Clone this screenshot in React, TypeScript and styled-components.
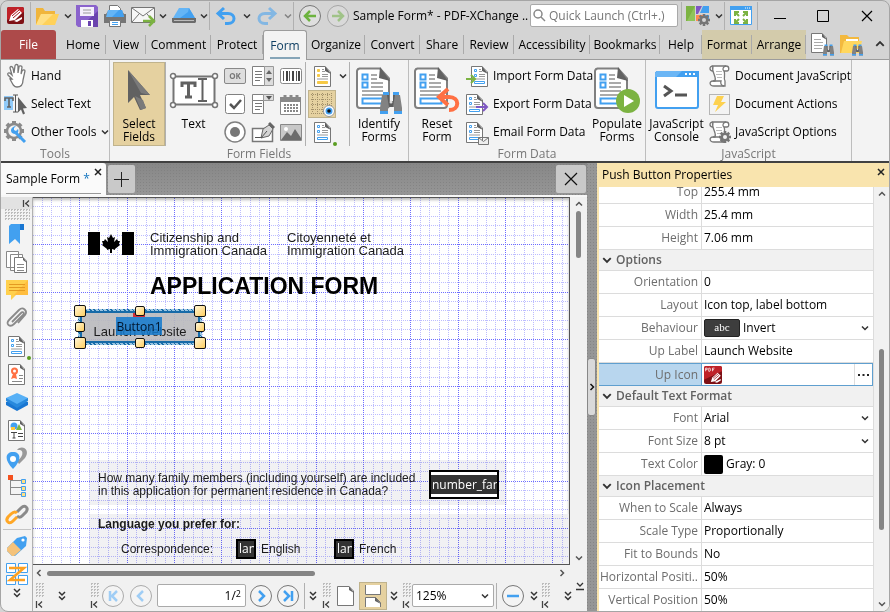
import React, { useState } from "react";
import styled, { createGlobalStyle, css } from "styled-components";

const ui = `"Open Sans", "Noto Sans", sans-serif`;
const doc = `"Liberation Sans", Arial, sans-serif`;
const BLUE = "#42a0f0";
const GREY = "#757575";
const DARK = "#616161";

const Global = createGlobalStyle`
  *, *::before, *::after { box-sizing: border-box; }
  body { margin: 0; background: #d4d4d4; font: 12px/16px ${ui}; color: #000; overflow: hidden; }
  button, input, select { font: inherit; color: inherit; margin: 0; padding: 0; border: 0; background: none; border-radius: 0; }
  svg { display: block; flex: none; overflow: visible; }
`;

/* ---------- icons ---------- */
type IconProps = { w: number; h: number; box?: string; children: React.ReactNode };
const Icon = ({ w, h, box, children }: IconProps) => (
  <svg width={w} height={h} viewBox={box || `0 0 ${w} ${h}`} fill="none" aria-hidden="true">{children}</svg>
);
const Chevron = ({ dir = "down", color = "#333", size = 8 }: { dir?: "down" | "up" | "left" | "right"; color?: string; size?: number }) => {
  const turn = { down: 0, up: 180, left: 90, right: 270 }[dir];
  return (
    <Icon w={size} h={size} box="0 0 8 8">
      <path d="M1 2.500 4 5.500 7 2.500" stroke={color} strokeWidth="1.500" transform={`rotate(${turn} 4 4)`} />
    </Icon>
  );
};
const DoubleChevron = () => (
  <Icon w={8} h={10}><path d="M1 1 4 4 7 1M1 5.500 4 8.500 7 5.500" stroke="#333" strokeWidth="1.500" /></Icon>
);
const PdfLogo = ({ size = 17, tag }: { size?: number; tag?: boolean }) => (
  <Icon w={size} h={size} box="0 0 17 17">
    <rect width="17" height="17" rx="2" fill="#7e1015" />
    <path d="M2 0h13a2 2 0 0 1 2 2v3L0 13V2a2 2 0 0 1 2-2Z" fill="#bf2229" />
    <g transform={tag ? "translate(5 5) scale(.72)" : undefined}>
      <path d="m2 14 2-6 7-6 4 4-7 7Z" fill="#fff" />
      <path d="m5 9 7-6M6 11l7-6" stroke="#a3191f" /><path d="m7 14 8-4v2l-5 3Z" fill="#fff" />
    </g>
    {tag && <path d="M1.500 5V2h1.500v1.500H1.500M4.500 2v3h1l.5-.5V2.500L5.500 2ZM8 5V2h2M8 3.500h1.500" stroke="#fff" strokeWidth=".7" />}
  </Icon>
);
const Folder = () => (
  <Icon w={23} h={18}>
    <path d="M0 1h7l2 3h10v5H5L1 18H0Z" fill="#f0b53c" />
    <path d="M5 7h18l-4 11H0Z" fill="#ffd15a" /><path d="m5 7 12 0L6 18H0Z" fill="#ffdf84" />
  </Icon>
);
const Floppy = () => (
  <Icon w={22} h={22}>
    <path d="M0 0h20l2 2v20H2l-2-2Z" fill="#8a63cc" /><path d="M22 6v16H4Z" fill="#6a43ae" />
    <path d="M4 2h14v9H4z" fill="#f4f0fb" /><path d="M7 5h8M7 8h8" stroke="#9a9a9a" />
    <path d="M5 15h12v7H5z" fill="#fff" /><path d="M12 16h3v5h-3z" fill="#6a43ae" />
  </Icon>
);
const Printer = () => (
  <Icon w={22} h={22}>
    <path d="M5.500.500h8l3 3V8h-11z" fill="#fff" stroke="#757575" />
    <path d="M0 9h2l2-3h14l2 3h2v9H0z" fill="#757575" /><path d="M4 5h14l2 7H2z" fill="#64b5f6" /><path d="M15 5h3l2 7H8Z" fill={BLUE} />
    <path d="M5.500 15.500h11v6h-11z" fill="#fff" stroke="#757575" /><path d="M8 17.500h6M8 19.500h6" stroke={BLUE} />
  </Icon>
);
const Mail = () => (
  <Icon w={25} h={18}>
    <path d="M.5.500h23v15h-23z" fill="#f6f6f6" stroke="#757575" />
    <path d="m1 1 11 8 11-8M1 15l7-8M23 15l-7-8" stroke="#757575" />
    <path d="M12 14h11M18 9l5 5-5 5" stroke="#7cb342" strokeWidth="2.500" />
  </Icon>
);
const Scanner = () => (
  <Icon w={24} h={17}>
    <path d="M7 1h10l6 10H1Z" fill="#64b5f6" /><path d="M17 1l6 10H8l8-6Z" fill={BLUE} />
    <path d="M0 11h24v4l-1 1H1l-1-1z" fill="#6b6b6b" /><path d="M2 13.500h20" stroke="#bbb" />
  </Icon>
);
const Undo = ({ faded }: { faded?: boolean }) => (
  <Icon w={20} h={18}>
    <g transform={faded ? "translate(20 0) scale(-1 1)" : undefined} opacity={faded ? 0.55 : 1} stroke={BLUE} strokeWidth="3">
      <path d="M8 1 2 6.500l6 5.500" /><path d="M2 6.500h10c8 0 8 10 0 10H9" />
    </g>
  </Icon>
);
const NavCircle = ({ d, color, edge = "#777" }: { d: string; color: string; edge?: string }) => (
  <Icon w={22} h={22}>
    <circle cx="11" cy="11" r="10.500" stroke={edge} fill="#fff" fillOpacity=".25" />
    <path d={d} stroke={color} strokeWidth="2.500" />
  </Icon>
);
const Magnifier = () => (
  <Icon w={13} h={13}><circle cx="5" cy="5" r="4" stroke="#888" strokeWidth="1.500" /><path d="m8 8 4 4" stroke="#888" strokeWidth="1.500" /></Icon>
);
const gearTeeth = [0, 45, 90, 135, 180, 225, 270, 315];
const Gear = ({ x, y, r, color = GREY, hole = "#f3f3f3" }: { x: number; y: number; r: number; color?: string; hole?: string }) => (
  <g transform={`translate(${x} ${y}) scale(${r / 6})`}>
    {gearTeeth.map((a) => <rect key={a} x="-1.300" y="-6" width="2.600" height="4" fill={color} transform={`rotate(${a})`} />)}
    <circle r="4.300" fill={color} /><circle r="2" fill={hole} />
  </g>
);
const LayoutIcon = () => (
  <Icon w={24} h={21}>
    <path d="M0 1h9v15H0z" fill="#7cb342" /><path d="M9 1v15H1Z" fill="#8fc45a" /><path d="M10 1h6l-4 8h-2z" fill="#7e57c2" />
    <path d="M17 1h6v7h-9z" fill={BLUE} /><path d="M10 10h13v6H10z" fill="#ff8a50" /><path d="M17 10h6v5h-6z" fill={BLUE} />
    <Gear x={18} y={15} r={6} hole="#d4d4d4" />
  </Icon>
);
const FullScreen = () => (
  <Icon w={22} h={19}>
    <path d="M.5.500h21v18H.5z" fill="#fff" stroke={BLUE} /><path d="M0 0h22v4H0z" fill={BLUE} /><path d="M15 2h1m1 0h1m1 0h1" stroke="#fff" />
    <path d="M5 10V6h4M13 6h4v4M17 13v4h-4M9 17H5v-4" stroke="#7cb342" strokeWidth="2" />
    <path d="m5 6 4 4m8-4-4 4m4 7-4-4m-8 4 4-4" stroke="#7cb342" strokeWidth="2" />
  </Icon>
);
const Binoculars = ({ x, y, s }: { x: number; y: number; s: number }) => (
  <g transform={`translate(${x} ${y}) scale(${s})`}>
    <path d="M2 4h7v6h4V4h7l2 13v6h-8v-7H8v7H0v-6Z" fill="#828282" /><path d="M7 4h2v6h4V4h2l-2 12H9Z" fill="#5d5d5d" />
    <path d="M3 1h6v3H3zM13 1h6v3h-6zM0 20h8v3H0zM14 20h8v3h-8z" fill={BLUE} /><circle cx="11" cy="11" r="1.500" fill="#ddd" />
  </g>
);
const PageOutline = ({ w, h, fold }: { w: number; h: number; fold: number }) => (
  <>
    <path d={`M.5 .5H${w - fold}L${w - 0.5} ${fold}V${h - 0.5}H.5Z`} fill="#fff" stroke="#777" />
    <path d={`M${w - fold} 0 L${w} ${fold + 2} L${w - fold} ${fold - 1}Z`} fill={DARK} />
  </>
);
const SearchPage = () => (
  <Icon w={24} h={22}>
    <PageOutline w={16} h={20} fold={5} /><path d="M3 6.500h7M3 9.500h9M3 12.500h9M3 15.500h8" stroke="#aaa" /><Binoculars x={12} y={11} s={0.5} />
  </Icon>
);
const SearchFolder = () => (
  <Icon w={24} h={22}>
    <path d="M0 2h7l2 2h10v16H0Z" fill="#f3b93f" /><path d="M4 8h18l-3 12H1Z" fill="#ffd75e" /><path d="M6 6h12v2H6z" fill="#fff" /><Binoculars x={12} y={11} s={0.5} />
  </Icon>
);
const BigForm = ({ children }: { children?: React.ReactNode }) => (
  <Icon w={46} h={47}>
    <path d="M3 1.500h21l9 10V38a3 3 0 0 1-3 3H4a3 3 0 0 1-3-3V4a3 3 0 0 1 3-2.500Z" fill="#fff" stroke="#808080" strokeWidth="2" />
    <path d="M24 0 34 14 23 11Z" fill={DARK} />
    <path d="M6.500 7.500h5v5h-5zM6.500 15.500h5v5h-5zM6.500 31.500h21v5h-21z" stroke={BLUE} strokeWidth="2" />
    <path d="M15 8h6M15 12h6M15 16h12M15 20h12M6 24h21M6 28h21" stroke="#8f8f8f" strokeWidth="1.500" />
    {children}
  </Icon>
);
const SmallForm = ({ children, tint = BLUE, w = 17, shift = 0 }: { children?: React.ReactNode; tint?: string; w?: number; shift?: number }) => (
  <Icon w={w} h={21}>
    <g transform={`translate(${shift} 0)`}>
      <PageOutline w={17} h={21} fold={6} />
      <path d="M3.500 3.500h2v2h-2zM3.500 8.500h2v2h-2zM3.500 15.500h10v2h-10z" stroke={tint} fill={tint === BLUE ? "none" : tint} />
      <path d="M8 3.500h2M8 5.500h3M8 8.500h6M8 10.500h6M3 13h11" stroke="#999" />
    </g>
    {children}
  </Icon>
);
const Scroll = ({ gear }: { gear?: boolean }) => (
  <Icon w={22} h={22}>
    <path d="M4 1h13c4 0 3 5 1 5h-3c2 4-1 7 1 10v5H5c-5 0-5-5-1-5h2C8 11 2 8 4 1Z" fill="#fff" stroke="#777" strokeWidth="1.300" />
    <path d="M4 1c-4 0-4 5 0 5M15 6c-2-1-1-5 2-5M4 16h8c-1 3 1 5 3 5" stroke="#777" strokeWidth="1.300" />
    <path d="M7 6.500h6M7 9.500h6M8 12.500h5" stroke="#bbb" />
    {gear && <Gear x={16} y={16} r={6} />}
  </Icon>
);
const Hand = () => (
  <Icon w={20} h={24}>
    <path d="M6 15 2 11c-1-2 1-3 3-1l1 1L4 4c0-2 2-2 3 0l1 5L9 2c0-2 3-2 3 0v7l1-6c0-2 3-1 3 0l-1 7 1-3c1-2 3-1 3 0l-2 9c0 5-2 7-6 7-3 0-4-2-7-8Z" fill="#fff" stroke="#777" strokeWidth="1.300" />
  </Icon>
);
const SelectTextIcon = () => (
  <Icon w={24} h={20}>
    <path d="M0 2h9v14H0z" fill="#90caf9" /><path d="M1 7V4h8v3M5 4v9M3 13h4" stroke={DARK} strokeWidth="1.600" />
    <path d="M9 1h5M9 18h5M11.500 1v17" stroke="#555" /><path d="m14 3 9 11-4 .5 2 5-2 1-2-5-3 3Z" fill={DARK} />
  </Icon>
);
const OtherTools = () => (
  <Icon w={23} h={23}>
    <g transform="translate(10 10)">
      {gearTeeth.map((a) => <rect key={a} x="-2" y="-10" width="4" height="4" fill="#8a8a8a" transform={`rotate(${a})`} />)}
      <circle r="7" stroke="#8a8a8a" strokeWidth="2.500" fill="#f3f3f3" />
    </g>
    <path d="M8 7c-2 2-1 6 3 6 3 0 4-3 3-5l-2 2-2-1 0-2 2-2c-2 0-3 1-4 2Z" fill={BLUE} /><path d="m12 12 9 9" stroke={BLUE} strokeWidth="3" />
  </Icon>
);
const BigArrow = () => (
  <Icon w={24} h={40}><path d="M1 0v33l6-6 6 13 6-2-6-13h10Z" fill={DARK} /><path d="M1 0 23 25l-9-2ZM8 26l6 14 5-2-3-8Z" fill="#7a7a7a" /></Icon>
);
const TextFieldIcon = () => (
  <Icon w={48} h={35}>
    <path d="M3.500 3.500h41v28h-41z" fill="#fff" stroke={GREY} strokeWidth="2" />
    {[3, 45].map((x) => [3, 32].map((y) => <circle key={`${x}-${y}`} cx={x} cy={y} r="2.500" fill="#fff" stroke={GREY} strokeWidth="1.500" />))}
    <path d="M12 14v-4h13v4M18.500 10v14M15 24h7" stroke={DARK} strokeWidth="3" /><path d="M28 6h9M28 28h9M32.500 6v22" stroke={DARK} strokeWidth="2" />
  </Icon>
);
const fieldIcons: Record<string, React.ReactNode> = {
  List: <Icon w={22} h={20}><path d="M.5.500h12v19H.5z" fill="#fff" stroke="#808080" /><path d="M12.500.500h9v19h-9z" fill="#ddd" stroke="#999" /><path d="M3 5.500h7M3 8.500h7M3 11.500h7M3 14.500h5" stroke="#777" /><path d="m14 8 3-4 3 4zM14 12l3 4 3-4z" fill="#666" /></Icon>,
  Barcode: <Icon w={22} h={16}><rect x=".5" y=".5" width="21" height="15" rx="2" fill="#fff" stroke="#888" /><path d="M3.500 3v10M9.500 3v10M16.500 3v10" stroke="#555" /><path d="M7 3v10M13 3v10M19 3v10" stroke="#444" strokeWidth="2" /></Icon>,
  Check: <Icon w={20} h={20}><rect x=".5" y=".5" width="19" height="19" rx="2" fill="#fff" stroke="#808080" /><path d="m5 10 4 4 7-8" stroke="#555" strokeWidth="2.500" /></Icon>,
  Combo: <Icon w={22} h={20}><path d="M.5 6.500h11v13H.5zM.5.500h11v6H.5z" fill="#fff" stroke="#808080" /><path d="M11.500.500h10v6h-10z" fill="#ddd" stroke="#999" /><path d="M3 9.500h7M3 12.500h7M3 15.500h5" stroke="#777" /><path d="M14 2h6l-3 4z" fill="#555" /></Icon>,
  Date: <Icon w={22} h={21}><path d="M.5 3.500h20v17H.5z" fill="#fff" stroke="#888" /><path d="M0 3h21v5H0z" fill="#888" /><path d="M5 5V1M11 5V1M17 5V1" stroke="#888" strokeWidth="3" /><path d="M4 11h14M4 14h14M4 17h14" stroke="#888" strokeWidth="2" strokeDasharray="2 1" /></Icon>,
  Radio: <Icon w={22} h={22}><circle cx="11" cy="11" r="10" fill="#fff" stroke="#808080" strokeWidth="1.500" /><circle cx="11" cy="11" r="5" fill="#777" /></Icon>,
  Sign: <Icon w={23} h={20}><path d="M.5 6.500h20v13H.5z" fill="#fff" stroke="#777" strokeWidth="1.500" /><path d="M3 15.500h8" stroke="#555" /><path d="m9 16 2-9 6-4 4 4-4 7Z" fill="#d5d5d5" stroke="#666" /><path d="m9 16 6-7" stroke="#555" /><path d="m16 2 2-2 5 5-2 2z" fill="#666" /></Icon>,
  Image: <Icon w={22} h={17}><rect width="22" height="17" rx="1" fill="#888" /><path d="M1 1h20v15H1z" fill="#c8c8c8" /><circle cx="6" cy="5" r="2" fill="#fff" /><path d="m1 16 6-8 4 4 4-7 6 9v2z" fill="#6c6c6c" /></Icon>,
};
const GridEye = () => (
  <Icon w={24} h={24}>
    {[2, 7, 12, 17, 21].map((p) => <path key={p} d={`M${p + 0.5} 1v20M1 ${p + 0.5}h20`} stroke="#a2906a" strokeDasharray="1 1" />)}
    <circle cx="19" cy="19" r="5.500" fill="#fff" stroke="#999" /><circle cx="19" cy="19" r="3.500" fill={BLUE} /><circle cx="19" cy="19" r="1.800" fill="#111" />
  </Icon>
);
const ConsoleIcon = () => (
  <Icon w={44} h={38}>
    <rect x="1" y="1" width="42" height="36" rx="2" fill="#fff" stroke={BLUE} strokeWidth="2" /><path d="M0 2 2 0h42v6H0z" fill={BLUE} /><path d="M0 2 2 0h25l-6 6H0z" fill="#6bb6f5" />
    <path d="M30 3h2m2 0h2m2 0h2" stroke="#fff" strokeWidth="2" /><path d="m9 15 7 5-7 5" stroke="#555" strokeWidth="3" /><path d="M20 24h12" stroke="#555" strokeWidth="3" />
  </Icon>
);
const Bolt = () => (
  <Icon w={21} h={21}><path d="M.5.500h20v20H.5z" stroke="#777" strokeDasharray="1 1" /><path d="M8 2h7l-3 6h5L6 18l3-7H4Z" fill="#fdd14f" /></Icon>
);
const sideIcons: { name: string; art: React.ReactNode }[] = [
  { name: "Bookmarks", art: <Icon w={15} h={20}><path d="M2 0h13v6h-4v14l-5-5-6 5V2Z" fill={BLUE} /><path d="M11 0h4v6h-4z" fill="#1976d2" /></Icon> },
  { name: "Thumbnails", art: <Icon w={21} h={22}><path d="M.5.500h12v16H.5zM4.500 3.500h12v16h-12z" fill="#fff" stroke="#888" /><g transform="translate(8 6)"><PageOutline w={13} h={16} fold={4} /><path d="M3 7.500h7M3 10.500h7M3 13.500h7" stroke="#888" /></g></Icon> },
  { name: "Comments", art: <Icon w={22} h={20}><path d="M0 0h22v15H10l-5 5v-5H0z" fill="#ffd04d" /><path d="M22 0v15H8z" fill="#ffbd3e" /><path d="M3 4.500h16M3 7.500h16M3 10.500h16" stroke="#e39a22" /></Icon> },
  { name: "Attachments", art: <Icon w={22} h={20}><path d="m6 14 9-9c2-2 4 0 2 2L8 16c-4 4-9 0-5-4L13 2c4-4 9 1 6 5l-7 8" stroke="#8a8a8a" strokeWidth="1.800" /></Icon> },
  { name: "Fields", art: <SmallForm><circle cx="21" cy="22" r="2" fill="#5a9e20" /></SmallForm> },
  { name: "Signatures", art: <Icon w={17} h={21}><PageOutline w={17} h={21} fold={5} /><path d="m5 10-2 5 3-1 3 1-1-5" fill="#ff7043" /><circle cx="6.500" cy="7" r="3.500" fill="#ff7043" /><circle cx="6.500" cy="7" r="1.500" fill="#fff" /><path d="M11 11.500h4M11 14.500h4M4 17.500h10" stroke="#888" /></Icon> },
  { name: "Layers", art: <Icon w={22} h={20}><path d="m0 13 11 6 11-6v-3H0z" fill="#1976d2" /><path d="m0 9 11 7 11-7v-3H0z" fill="#2889dd" /><path d="m0 6 11-5 11 5-11 6Z" fill="#57b0f6" /></Icon> },
  { name: "Content", art: <Icon w={17} h={21}><PageOutline w={17} h={21} fold={5} /><circle cx="6" cy="6" r="3.500" fill={BLUE} /><path d="m8 10 3-6 3 6z" fill="#7cb342" /><path d="M3 7h4v3H3z" fill="#ffc83d" /><path d="M3 12.500h6M6 12v6M4.500 18h3M10 13.500h5M10 16.500h5" stroke="#444" /></Icon> },
  { name: "Destinations", art: <Icon w={22} h={22}><path d="M11 3c5-6 14 0 8 8l-6 6-2-3c6-4 7-10 3-11Z" fill="#999" /><path d="M7 22c-9-9-8-17 0-17s9 8 0 17Z" fill={BLUE} /><circle cx="7" cy="12" r="3" fill="#fff" /></Icon> },
  { name: "Structure", art: <Icon w={18} h={22}><path d="M2.500 4v15.500M2 5.500h12M2 12.500h12M2 19.500h12" stroke="#888" /><path d="M0 0h5v5H0z" fill="#f4511e" /><path d="M13.500 4.500h4v4h-4zM13.500 11.500h4v4h-4zM13.500 17.500h4v4h-4z" fill="#ffe082" stroke={BLUE} /></Icon> },
  { name: "Links", art: <Icon w={22} h={20}><path d="m11 8 4-4c4-4 8 0 5 4l-4 4c-2 2-4 1-5 0" stroke="#8a8a8a" strokeWidth="3" /><path d="M11 9c-2-2-4-1-6 1l-3 3c-3 4 1 8 5 4l4-4" stroke="#ffa726" strokeWidth="3" /></Icon> },
];
const Tag = () => <Icon w={20} h={20}><path d="M10 2 18 0l2 2-1 8L8 20H5L0 15v-3Z" fill={BLUE} /><path d="m6 6 8 8-7 6H5l-5-5v-3Z" fill="#f4c27a" /><circle cx="16" cy="4" r="1.600" fill="#fff" /></Icon>;
const Flow = () => <Icon w={22} h={22}><path d="M.5.500h9v9h-9zM12.500.500h9v9h-9zM.5 12.500h9v9h-9zM12.500 12.500h9v9h-9z" fill="#fff" stroke={BLUE} /><path d="M3 5h15L4 17h15" stroke="#ffa01e" strokeWidth="2.500" /></Icon>;
const Collapse = () => <Icon w={7} h={7}><path d="M.5 0v7M6 .500 3 3.500l3 3M2 3.500h2" stroke="#444" strokeWidth="1.300" /></Icon>;
const SmallCross = () => <Icon w={6} h={6}><path d="m0 0 6 6M6 0 0 6" stroke="#222" strokeWidth="1.500" /></Icon>;
const MapleFlag = () => (
  <Icon w={46} h={23}>
    <path d="M0 0h12v23H0zM34 0h12v23H34z" fill="#000" />
    <path d="m23 2 2 4 2-1-1 5 3-3 1 2h2l-1 3 1 1-5 4v1l-3-1v4h-2v-4l-3 1v-1l-5-4 1-1-1-3h2l1-2 3 3-1-5 2 1Z" fill="#000" />
  </Icon>
);

/* ---------- frame ---------- */
const Window = styled.div`
  height: 100vh; display: flex; flex-direction: column; background: #d4d4d4;
  border: 1px solid #a5a5a5; border-radius: 8px; overflow: hidden;
`;
const TitleBar = styled.header`flex: none; height: 29px; display: flex; align-items: center;`;
const Tool = styled.button<{ $w: number; $faded?: boolean }>`
  flex: none; width: ${(p) => p.$w}px; height: 28px; display: flex; align-items: center; justify-content: center;
  opacity: ${(p) => (p.$faded ? 0.5 : 1)};
`;
const Divider = styled.i<{ $h?: number }>`flex: none; width: 1px; height: ${(p) => p.$h || 28}px; background: #b0b0b0;`;
const Caption = styled.h1`flex: 1 1 0; min-width: 0; margin: 0 0 0 3px; font: 12px/16px ${ui}; white-space: nowrap;`;
const Search = styled.label`
  flex: none; width: 148px; height: 23px; display: flex; align-items: center; gap: 3px; padding: 0 2px; margin-right: 3px;
  background: #fff; border: 1px solid #a9a9a9; border-radius: 2px; color: #777;
  input { flex: 1; min-width: 0; outline: 0; } input::placeholder { color: #777; opacity: 1; }
`;
const TabStrip = styled.nav`flex: none; height: 30px; display: flex; align-items: stretch; border-bottom: 1px solid #9c9c9c;`;
const Tab = styled.button<{ $w: number; $kind?: "file" | "active" | "context" }>`
  flex: none; width: ${(p) => p.$w}px; position: relative; white-space: nowrap; text-align: center;
  &::after { content: ""; position: absolute; right: 0; top: 5px; height: 19px; width: 1px; background: #aaa; }
  ${(p) => p.$kind === "file" && css`background: #ad4a4a; color: #fff; border-radius: 3px 3px 0 0; margin-right: 4px; &::after { display: none; }`}
  ${(p) => p.$kind === "context" && css`background: #d3cbab;`}
  ${(p) => p.$kind === "active" && css`
    background: #f3f3f3; color: #0f3f63; border: 1px solid #9c9c9c; border-bottom: 0; border-radius: 3px 3px 0 0; margin-bottom: -1px; z-index: 1;
    &&::after { left: 6px; right: 6px; width: auto; top: auto; bottom: 1px; height: 2px; background: #86a5b8; }`}
`;
const Spacer = styled.div`flex: 1;`;

/* ---------- ribbon ---------- */
const Ribbon = styled.section`flex: none; height: 103px; display: flex; background: #f3f3f3; border-bottom: 2px solid #414141;`;
const Group = styled.div<{ $w: number }>`
  flex: none; width: ${(p) => p.$w}px; display: flex; flex-direction: column; border-right: 1px solid #bdbdbd;
`;
const GroupBody = styled.div`height: 87px; display: flex; padding-top: 2px;`;
const GroupTitle = styled.div`height: 14px; line-height: 14px; color: #777; text-align: center;`;
const Stack = styled.div<{ $w: number }>`flex: none; width: ${(p) => p.$w}px;`;
const RowButton = styled.button`
  display: flex; align-items: center; gap: 4px; height: 28px; padding-left: 1px; white-space: nowrap;
  span { flex: none; width: 23px; display: flex; justify-content: center; }
`;
const BigButton = styled.button<{ $w: number; $on?: boolean }>`
  flex: none; width: ${(p) => p.$w}px; height: 84px; display: flex; flex-direction: column; align-items: center; line-height: 13px;
  background: ${(p) => (p.$on ? "#e5d1a0" : "none")}; border: 1px solid ${(p) => (p.$on ? "#c0b38c" : "transparent")};
  span { height: 54px; display: flex; align-items: center; flex: none; }
`;
const FieldGrid = styled.div`
  flex: none; width: 84px; display: grid; grid-template-columns: repeat(3, 28px); grid-auto-rows: 28px;
`;
const IconButton = styled.button<{ $on?: boolean }>`
  width: 28px; height: 28px; display: flex; align-items: center; justify-content: center;
  background: ${(p) => (p.$on ? "#e5d1a0" : "none")}; border: 1px solid ${(p) => (p.$on ? "#c0b38c" : "transparent")};
`;
const OkKey = styled.b`
  width: 22px; height: 16px; border: 1px solid #888; border-radius: 2px; background: #dedede; color: #777; font: bold 8px/14px ${ui}; text-align: center;
`;
const Column = styled.div`flex: none; width: 43px; display: grid; grid-template-columns: 28px 1fr; grid-auto-rows: 28px; align-items: center; justify-items: center; padding-left: 2px;`;

/* ---------- workspace ---------- */
const Work = styled.main`
  flex: 1; min-height: 0; display: flex; background-color: #969696;
  background-image: radial-gradient(#858585 1px, transparent 1px); background-size: 3px 3px;
`;
const Left = styled.div`flex: 1; min-width: 0; display: flex; flex-direction: column;`;
const DocTabs = styled.div`flex: none; height: 34px; display: flex; align-items: center; border-bottom: 2px solid #f7f7f7; background: linear-gradient(#7d7d7d99, #96969600);`;
const DocTab = styled.div`
  width: 105px; height: 32px; padding: 8px 5px 0 5px; display: flex; justify-content: space-between; background: #fafafa; position: relative; white-space: nowrap;
  border-radius: 0 3px 0 0; em { font-style: normal; color: #1677c0; }
  &::after { content: ""; position: absolute; left: 5px; right: 5px; bottom: 1px; height: 1px; background: #999; }
  button { height: 6px; margin-top: -2px; }
`;
const SquareButton = styled.button<{ $w: number }>`
  width: ${(p) => p.$w}px; height: 28px; background: #c9c9c9; border-radius: 2px; display: flex; align-items: center; justify-content: center; margin: 0 1px 0 2px;
`;
const Body = styled.div`flex: 1; min-height: 0; display: flex;`;
const SideBar = styled.aside`flex: none; width: 32px; background: #f3f3f3; display: flex; flex-direction: column; align-items: center; border-right: 1px solid #b0b0b0;`;
const SideTop = styled.div`flex: none; align-self: stretch; height: 12px; background: #e2e2e2; display: flex; justify-content: flex-end; align-items: center; padding-right: 2px;`;
const Grip = styled.i<{ $w: number; $h: number }>`
  flex: none; width: ${(p) => p.$w}px; height: ${(p) => p.$h}px;
  background: conic-gradient(#bcbcbc 25%, transparent 0) 0 0 / 3px 3px;
`;
const SideButton = styled.button`flex: none; width: 28px; height: 28px; display: flex; align-items: center; justify-content: center;`;
const SideLine = styled.i`flex: none; width: 28px; height: 1px; margin: 1px 0 2px; background: #c4c4c4;`;
const Center = styled.div`flex: 1; min-width: 0; display: flex; flex-direction: column; background: #f1f1f1;`;
const ViewRow = styled.div`flex: 1; min-height: 0; display: flex;`;
const Canvas = styled.div`
  flex: 1; min-width: 0; position: relative; overflow: hidden; background: #fff; font-family: ${doc}; color: #1c1c1c;
  border: 1px solid #555; border-left: 0; box-shadow: inset 0 2px 3px #bbb;
`;
const VScroll = styled.div<{ $w: number }>`flex: none; width: ${(p) => p.$w}px; background: #f1f1f1; display: flex; flex-direction: column; align-items: center; padding: 1px 0;`;
const Thumb = styled.i<{ $h: number; $top?: number }>`width: 5px; height: ${(p) => p.$h}px; margin-top: ${(p) => p.$top || 0}px; border-radius: 3px; background: #858585;`;
const HScroll = styled.div`flex: none; height: 16px; display: flex; align-items: center; padding: 0 19px 0 0;`;
const HThumb = styled.i`width: 50%; height: 5px; margin: 0 auto 0 2px; border-radius: 3px; background: #858585;`;
const ScrollButton = styled.button`width: 12px; height: 12px; display: flex; align-items: center; justify-content: center;`;
const Status = styled.footer`flex: none; height: 30px; padding-bottom: 1px; display: flex; align-items: center;`;
const GripCell = styled.div<{ $w: number }>`
  flex: none; width: ${(p) => p.$w}px; height: 26px; display: flex; flex-direction: column; align-items: center; gap: 3px;
`;
const PageBox = styled.label`
  flex: none; width: 89px; height: 23px; display: flex; align-items: center; justify-content: flex-end; margin: 0 4px 0 2px; padding-right: 4px;
  background: #fff; border: 1px solid #aaa; border-radius: 2px;
  input { width: 20px; text-align: right; outline: 0; } small { font-size: 9px; margin-bottom: 4px; }
`;
const Picker = styled.span<{ $w?: number }>`
  display: flex; align-items: center; ${(p) => (p.$w ? `flex: none; width: ${p.$w}px; height: 23px; border: 1px solid #aaa; background: #fff; border-radius: 2px; padding: 0 4px 0 3px;` : "flex: 1; padding-right: 4px;")}
  select { flex: 1; min-width: 0; appearance: none; outline: 0; height: 20px; } svg { margin-left: -8px; pointer-events: none; }
`;
const CornerTool = styled.button`align-self: flex-start; width: 8px; height: 10px;`;
const Splitter = styled.div`flex: none; width: 10px; display: flex; align-items: center;`;
const SplitButton = styled.button`width: 9px; height: 58px; background: #d9d9d9; border: 1px solid #888; border-radius: 3px; display: flex; align-items: center; justify-content: center;`;

/* ---------- document ---------- */
const Sheet = styled.article`height: 100%; overflow: hidden; white-space: nowrap; font-size: 12px; line-height: 13px;`;
const Letterhead = styled.div`display: flex; gap: 16px; padding: 33px 0 0 55px; font-size: 13px; height: 73px; svg { margin-top: 1px; } div { min-width: 121px; }`;
const Title = styled.h2`margin: 0 0 0 117px; font: bold 23px/31px ${doc}; height: 189px; color: #000;`;
const Question = styled.div`
  width: 418px; height: 45px; margin-left: 56px; padding: 4px 8px 0 9px; display: flex; justify-content: space-between; align-items: center; background: #f1f1f3;
`;
const Language = styled.div`margin: 9px 0 0 56px; padding: 4px 0 0 9px; height: 90px; background: #f1f1f3;`;
const Options = styled.div`display: flex; align-items: center; gap: 5px; height: 20px; margin: 8px 0 0 23px; `;
const Opt = styled.span<{ $w: number }>`width: ${(p) => p.$w}px;`;
const DarkField = styled.span<{ $w: number; $h: number }>`
  flex: none; width: ${(p) => p.$w}px; height: ${(p) => p.$h}px; border: 2px solid #000; background: #333; color: #fff; overflow: hidden; display: flex; align-items: center;
  font: 12px/18px ${ui}; padding-left: 1px; position: relative; z-index: 2; ${(p) => p.$h > 20 && css`box-shadow: inset 0 3px #fff, inset 0 -3px #fff;`}
`;
const GridLayer = styled.svg`position: absolute; inset: 0; width: 100%; height: 100%; z-index: 1; pointer-events: none; mix-blend-mode: multiply;`;
const Selected = styled.div`
  position: absolute; z-index: 3; left: 45px; top: 111px; width: 124px; height: 36px; border: 2px solid #176ba8;
  border-image: repeating-linear-gradient(45deg, #176ba8 0 1px, #9cc6e2 1px 3px) 2;
  background: rgba(185, 185, 188, 0.9); box-shadow: inset 0 0 0 2px #176ba8; font: 13px/30px ${doc}; text-align: center; padding-top: 6px;
`;
const FieldName = styled.span`
  position: absolute; left: 36px; top: 6px; width: 46px; height: 18px; background: rgba(20, 122, 205, 0.86); font: 12px/19px ${ui}; text-align: center; color: #00152b;
`;
const RedMark = styled.i`position: absolute; left: 53px; top: 2px; width: 12px; height: 4px; background: #d32f3a;`;
const Handle = styled.i<{ $x: number; $y: number; $s: number }>`
  position: absolute; width: ${(p) => p.$s}px; height: ${(p) => p.$s}px; left: ${(p) => p.$x - p.$s / 2}px; top: ${(p) => p.$y - p.$s / 2}px;
  border: 1px solid #111; border-radius: 2px; background: linear-gradient(135deg, #fff6d8, #ffcf61);
`;

/* ---------- properties ---------- */
const Panel = styled.aside`flex: none; width: 292px; display: flex; flex-direction: column; background: #f9e4ae; padding-left: 2px;`;
const PanelHead = styled.div`flex: none; height: 24px; display: flex; justify-content: space-between; padding: 4px 5px 0 3px; button { height: 9px; }`;
const PanelBody = styled.div`flex: 1; min-height: 0; display: flex; background: #f1f1f1; overflow: hidden;`;
const Clip = styled.div`flex: 1; min-width: 0; overflow: hidden;`;
const Table = styled.table`
  width: 100%; table-layout: fixed; border-collapse: separate; border-spacing: 0; background: #fff; margin-top: -6px; border-right: 1px solid #dcdcdc;
  td, th { padding: 0; height: 23px; border-bottom: 1px solid #dcdcdc; line-height: 16px; white-space: nowrap; overflow: hidden; }
  col:first-child { width: 103px; }
`;
const Label = styled.th<{ $on?: boolean }>`
  text-align: right; font-weight: 400; color: #6d6d6d; border-right: 1px solid #dcdcdc; background: ${(p) => (p.$on ? "#b8d6ee" : "#fff")};
  && { padding-right: 3px; ${(p) => p.$on && "border-color: #5f9fcf; border-top: 1px solid #5f9fcf;"} }
`;
const Value = styled.td<{ $on?: boolean }>`&& { padding-left: 2px; ${(p) => p.$on && "border-color: #5f9fcf; border-top: 1px solid #5f9fcf; border-right: 1px solid #5f9fcf;"} }`;
const ValueLine = styled.div`display: flex; align-items: center; gap: 3px; height: 21px;`;
const Section = styled.th`
  text-align: left; color: #616161; background: #f1f1f1;
  && { height: 21px; padding-left: 3px; } button { display: flex; align-items: center; gap: 4px; font-weight: 600; height: 20px; }
`;
const Abc = styled.b`width: 36px; height: 18px; border: 1px solid #222; border-radius: 2px; background: #3d3d3d; color: #fff; font: 11px/14px "Liberation Serif", serif; text-align: center;`;
const Swatch = styled.i`width: 19px; height: 19px; border-radius: 2px; background: #000;`;
const More = styled.button`margin-left: auto; width: 18px; height: 21px; border-left: 1px solid #ddd; display: flex; align-items: center; justify-content: center;`;

const tabs: [string, number, ("file" | "active" | "context")?][] = [
  ["File", 55, "file"], ["Home", 46], ["View", 40], ["Comment", 65], ["Protect", 52], ["Form", 44, "active"], ["Organize", 58], ["Convert", 55],
  ["Share", 44], ["Review", 50], ["Accessibility", 76], ["Bookmarks", 70], ["Help", 42], ["Format", 50, "context"], ["Arrange", 54, "context"],
];

type Prop = { name: string; value: string; kind?: "select" | "abc" | "icon" | "color" };
type PropSection = { title?: string; rows: Prop[] };
const sections: PropSection[] = [
  { rows: [{ name: "Top", value: "255.4 mm" }, { name: "Width", value: "25.4 mm" }, { name: "Height", value: "7.06 mm" }] },
  { title: "Options", rows: [
    { name: "Orientation", value: "0" }, { name: "Layout", value: "Icon top, label bottom" }, { name: "Behaviour", value: "Invert", kind: "abc" },
    { name: "Up Label", value: "Launch Website" }, { name: "Up Icon", value: "", kind: "icon" }] },
  { title: "Default Text Format", rows: [
    { name: "Font", value: "Arial", kind: "select" }, { name: "Font Size", value: "8 pt", kind: "select" }, { name: "Text Color", value: "Gray: 0", kind: "color" }] },
  { title: "Icon Placement", rows: [
    { name: "When to Scale", value: "Always" }, { name: "Scale Type", value: "Proportionally" }, { name: "Fit to Bounds", value: "No" },
    { name: "Horizontal Positi..", value: "50%" }, { name: "Vertical Position", value: "50%" }] },
];
const PropValue = ({ p }: { p: Prop }) => (
  <ValueLine>
    {p.kind === "abc" && <Abc>abc</Abc>}
    {p.kind === "color" && <Swatch />}
    {p.kind === "icon" && <PdfLogo size={18} tag />}
    {p.kind === "select" || p.kind === "abc" ? (
      <Picker><select aria-label={p.name}><option>{p.value}</option></select><Chevron /></Picker>
    ) : <span>{p.value}</span>}
    {p.kind === "icon" && <More aria-label="Browse"><Icon w={11} h={2}><path d="M0 1h2M4.500 1h2M9 1h2" stroke="#222" strokeWidth="2" /></Icon></More>}
  </ValueLine>
);

const STEP = 47.27;
const GridLines = () => {
  const minor: string[] = [];
  const major: string[] = [];
  for (let i = 0; i < 140; i++) {
    const x = Math.round(-0.8 + (i * STEP) / 5) + 0.5;
    const y = Math.round(-1 + (i * STEP) / 5) + 0.5;
    (i % 5 === 0 ? major : minor).push(`M0 ${y}H1400M${x} 0V1400`);
  }
  return (
    <GridLayer aria-hidden="true" fill="none">
      <path d={minor.join("")} stroke="#bcbcff" strokeDasharray="1 1" />
      <path d={major.join("")} stroke="#6c6cff" strokeDasharray="1 1" />
    </GridLayer>
  );
};

const StatusGrip = ({ w }: { w: number }) => <GripCell $w={w}><Grip $w={9} $h={15} /><Collapse /></GripCell>;

export default function App() {
  const [page, setPage] = useState("1");
  return (
    <Window>
      <Global />
      <TitleBar>
        <Tool $w={29} aria-label="Menu"><PdfLogo /></Tool><Divider />
        <Tool $w={33} aria-label="Open"><Folder /></Tool><Tool $w={8} aria-label="Open options"><Chevron /></Tool>
        <Tool $w={29} aria-label="Save"><Floppy /></Tool><Tool $w={28} aria-label="Print"><Printer /></Tool>
        <Tool $w={29} aria-label="Email"><Mail /></Tool><Tool $w={10} aria-label="Email options"><Chevron /></Tool>
        <Tool $w={31} aria-label="Scan"><Scanner /></Tool><Tool $w={10} aria-label="Scan options"><Chevron /></Tool><Divider />
        <Tool $w={32} aria-label="Undo"><Undo /></Tool><Tool $w={10} aria-label="Undo options"><Chevron /></Tool>
        <Tool $w={30} aria-label="Redo"><Undo faded /></Tool><Tool $w={11} $faded aria-label="Redo options"><Chevron /></Tool><Divider />
        <Tool $w={32} aria-label="Back"><NavCircle d="M17 11H6M11 6l-5 5 5 5" color="#6db33f" /></Tool>
        <Tool $w={24} $faded aria-label="Forward"><NavCircle d="M5 11h11M11 6l5 5-5 5" color="#6db33f" /></Tool>
        <Caption>Sample Form* - PDF-XChange ..</Caption>
        <Search><Magnifier /><input aria-label="Quick Launch" placeholder="Quick Launch (Ctrl+.)" /></Search>
        <Divider /><Tool $w={31} aria-label="Theme"><LayoutIcon /></Tool><Tool $w={11} aria-label="Theme options"><Chevron /></Tool><Divider />
        <Tool $w={32} aria-label="Full screen"><FullScreen /></Tool><Divider />
        <Tool $w={43} aria-label="Minimize"><Icon w={12} h={8}><path d="M0 6.500h12" stroke="#000" /></Icon></Tool>
        <Tool $w={44} aria-label="Maximize"><Icon w={12} h={12}><path d="M.5.500h11v11H.5z" stroke="#000" /></Icon></Tool>
        <Tool $w={44} aria-label="Close"><Icon w={10} h={10}><path d="m0 0 10 10M10 0 0 10" stroke="#000" strokeWidth="1.200" /></Icon></Tool>
      </TitleBar>
      <TabStrip>
        {tabs.map(([t, w, k]) => <Tab key={t} $w={w} $kind={k}>{t}</Tab>)}
        <Tool $w={34} aria-label="Find in page"><SearchPage /></Tool><Tool $w={24} aria-label="Find in files"><SearchFolder /></Tool><Spacer />
        <Tool $w={18} aria-label="Collapse ribbon"><Chevron dir="up" size={10} /></Tool>
      </TabStrip>
      <Ribbon>
        <Group $w={109}>
          <GroupBody><Stack $w={2} /><Stack $w={106}>
            <RowButton><span><Hand /></span>Hand</RowButton>
            <RowButton><span><SelectTextIcon /></span>Select Text</RowButton>
            <RowButton><span><OtherTools /></span>Other Tools<Chevron /></RowButton>
          </Stack></GroupBody>
          <GroupTitle>Tools</GroupTitle>
        </Group>
        <Group $w={299}>
          <GroupBody>
            <Stack $w={3} /><BigButton $w={52} $on><span><BigArrow /></span>Select<br />Fields</BigButton>
            <Divider $h={84} /><BigButton $w={55}><span><TextFieldIcon /></span>Text</BigButton>
            <FieldGrid>
              <IconButton aria-label="OK button"><OkKey>OK</OkKey></IconButton>
              {Object.entries(fieldIcons).map(([n, art]) => <IconButton key={n} aria-label={n}>{art}</IconButton>)}
            </FieldGrid>
            <Divider $h={84} />
            <Column>
              <IconButton aria-label="Highlight fields"><SmallForm tint="#f6c945" /></IconButton><Chevron />
              <IconButton $on aria-label="Show grid"><GridEye /></IconButton><i />
              <IconButton aria-label="Tab order"><SmallForm><circle cx="21" cy="22" r="2" fill="#5a9e20" /></SmallForm></IconButton><i />
            </Column>
            <Divider $h={84} />
            <BigButton $w={58}><span><BigForm><Binoculars x={24} y={24} s={1} /></BigForm></span>Identify<br />Forms</BigButton>
          </GroupBody>
          <GroupTitle>Form Fields</GroupTitle>
        </Group>
        <Group $w={237}>
          <GroupBody>
            <BigButton $w={56}><span><BigForm><path d="m34 22-9 8 9 8M26 30h9c11 0 11 13 0 13" stroke="#ff7043" strokeWidth="4" /></BigForm></span>Reset<br />Form</BigButton>
            <Stack $w={124}>
              <RowButton><span><SmallForm w={23} shift={5}><path d="M0 13h9M5 9l4 4-4 4" stroke="#7cb342" strokeWidth="2" /></SmallForm></span>Import Form Data</RowButton>
              <RowButton><span><SmallForm w={23}><path d="M10 13h11M17 9l4 4-4 4" stroke="#7e57c2" strokeWidth="2" /></SmallForm></span>Export Form Data</RowButton>
              <RowButton><span><SmallForm w={23}><path d="M12.500 15.500h10v7h-10zl5 4 5-4" fill="#eee" stroke="#777" /></SmallForm></span>Email Form Data</RowButton>
            </Stack>
            <BigButton $w={56}><span><BigForm><circle cx="34" cy="34" r="12" fill="#7cb342" /><path d="m30 28 10 6-10 6z" fill="#fff" /></BigForm></span>Populate<br />Forms</BigButton>
          </GroupBody>
          <GroupTitle>Form Data</GroupTitle>
        </Group>
        <Group $w={206}>
          <GroupBody>
            <BigButton $w={61}><span><ConsoleIcon /></span>JavaScript<br />Console</BigButton>
            <Stack $w={144}>
              <RowButton><span><Scroll /></span>Document JavaScript</RowButton>
              <RowButton><span><Bolt /></span>Document Actions</RowButton>
              <RowButton><span><Scroll gear /></span>JavaScript Options</RowButton>
            </Stack>
          </GroupBody>
          <GroupTitle>JavaScript</GroupTitle>
        </Group>
      </Ribbon>
      <Work>
        <Left>
          <DocTabs>
            <DocTab><span>Sample Form <em>*</em></span><button aria-label="Close tab"><SmallCross /></button></DocTab>
            <SquareButton $w={27} aria-label="New tab"><Icon w={15} h={15}><path d="M0 7.500h15M7.500 0v15" stroke="#222" /></Icon></SquareButton>
            <Spacer />
            <SquareButton $w={30} aria-label="Close document"><Icon w={12} h={12}><path d="m0 0 12 12M12 0 0 12" stroke="#111" strokeWidth="1.200" /></Icon></SquareButton>
          </DocTabs>
          <Body>
            <SideBar>
              <SideTop><Collapse /></SideTop>
              <Grip $w={26} $h={11} />
              {sideIcons.map((s) => <SideButton key={s.name} aria-label={s.name}>{s.art}</SideButton>)}
              <SideLine />
              <SideButton aria-label="Properties"><Tag /></SideButton>
              <SideButton aria-label="Order"><Flow /></SideButton>
              <button aria-label="More panels"><DoubleChevron /></button>
            </SideBar>
            <Center>
              <ViewRow>
                <Canvas>
                  <Sheet>
                    <Letterhead>
                      <MapleFlag />
                      <div>Citizenship and<br />Immigration Canada</div>
                      <div>Citoyenneté et<br />Immigration Canada</div>
                    </Letterhead>
                    <Title>APPLICATION FORM</Title>
                    <Question>
                      <div>How many family members (including yourself) are included<br />in this application for permanent residence in Canada?</div>
                      <DarkField $w={70} $h={29}>number_fan</DarkField>
                    </Question>
                    <Language>
                      <b>Language you prefer for:</b>
                      <Options>
                        <Opt $w={110}>Correspondence:</Opt>
                        <DarkField $w={20} $h={20}>lan</DarkField><Opt $w={68}>English</Opt>
                        <DarkField $w={20} $h={20}>lan</DarkField><Opt $w={68}>French</Opt>
                      </Options>
                    </Language>
                  </Sheet>
                  <GridLines />
                  <Selected>
                    Launch Website
                    <RedMark /><FieldName>Button1</FieldName>
                    {[0, 60, 120].map((x) => [0, 16, 32].filter((y) => x !== 60 || y !== 16).map((y) => (
                      <Handle key={`${x}-${y}`} $x={x} $y={y} $s={x === 60 || y === 16 ? 10 : 12} />
                    )))}
                  </Selected>
                </Canvas>
                <VScroll $w={17}>
                  <ScrollButton aria-label="Scroll up"><Chevron dir="up" color="#555" /></ScrollButton><Thumb $h={47} $top={1} /><Spacer />
                  <ScrollButton aria-label="Scroll down"><Chevron color="#555" /></ScrollButton>
                </VScroll>
              </ViewRow>
              <HScroll>
                <ScrollButton aria-label="Scroll left"><Chevron dir="left" color="#555" /></ScrollButton><HThumb />
                <ScrollButton aria-label="Scroll right"><Chevron dir="right" color="#555" /></ScrollButton>
              </HScroll>
              <Status>
                <StatusGrip w={12} /><Tool $w={34} aria-label="More"><DoubleChevron /></Tool><Spacer /><StatusGrip w={10} />
                <Tool $w={28} aria-label="First page"><NavCircle d="M8 6v10M15 6l-5 5 5 5" color="#9fcdf5" edge="#aaa" /></Tool>
                <Tool $w={28} aria-label="Previous page"><NavCircle d="m13 6-5 5 5 5" color="#9fcdf5" edge="#aaa" /></Tool>
                <PageBox><input aria-label="Page" value={page} onChange={(e) => setPage(e.target.value)} />/<small>2</small></PageBox>
                <Tool $w={22} aria-label="Next page"><NavCircle d="m9 6 5 5-5 5" color={BLUE} /></Tool>
                <Tool $w={32} aria-label="Last page"><NavCircle d="M15 6v10M7 6l5 5-5 5" color={BLUE} /></Tool>
                <Divider $h={26} /><Tool $w={16} aria-label="More navigation"><DoubleChevron /></Tool><StatusGrip w={10} />
                <Tool $w={28} aria-label="Single page"><Icon w={17} h={20}><PageOutline w={17} h={20} fold={5} /></Icon></Tool>
                <IconButton $on aria-label="Continuous"><Icon w={17} h={22}><path d="M.5 0v9.500h15V0M.5 22v-9.500h10l5 5V22" fill="#fff" stroke="#777" /><path d="m10 12 6 7-6-3z" fill={DARK} /></Icon></IconButton>
                <Tool $w={13} aria-label="More layouts"><DoubleChevron /></Tool><StatusGrip w={12} />
                <Picker $w={82}><select aria-label="Zoom"><option>125%</option></select><Chevron /></Picker>
                <Stack $w={2} /><Divider $h={26} /><Tool $w={32} aria-label="Zoom out"><NavCircle d="M5 11h12" color={BLUE} /></Tool>
                <Tool $w={10} aria-label="More zoom"><DoubleChevron /></Tool><StatusGrip w={13} />
                <Stack $w={8} /><Tool $w={16} aria-label="More"><DoubleChevron /></Tool>
                <CornerTool aria-label="Toolbar options"><Icon w={8} h={9}><path d="m1 1 3 3 3-3M0 7.500h8" stroke="#333" strokeWidth="1.300" /></Icon></CornerTool><Stack $w={3} />
              </Status>
            </Center>
          </Body>
        </Left>
        <Splitter><SplitButton aria-label="Hide panel"><Chevron dir="right" color="#111" /></SplitButton></Splitter>
        <Panel>
          <PanelHead>Push Button Properties<button aria-label="Close panel"><SmallCross /></button></PanelHead>
          <PanelBody>
            <Clip>
              <Table>
                <colgroup><col /><col /></colgroup>
                <tbody>
                  {sections.map((s, i) => (
                    <React.Fragment key={i}>
                      {s.title && <tr><Section colSpan={2}><button><Chevron size={10} />{s.title}</button></Section></tr>}
                      {s.rows.map((p) => (
                        <tr key={p.name}><Label scope="row" $on={p.kind === "icon"}>{p.name}</Label><Value $on={p.kind === "icon"}><PropValue p={p} /></Value></tr>
                      ))}
                    </React.Fragment>
                  ))}
                </tbody>
              </Table>
            </Clip>
            <VScroll $w={15}>
              <ScrollButton aria-label="Scroll up"><Chevron dir="up" color="#555" /></ScrollButton><Thumb $h={181} $top={149} /><Spacer />
              <ScrollButton aria-label="Scroll down"><Chevron color="#555" /></ScrollButton>
            </VScroll>
          </PanelBody>
        </Panel>
      </Work>
    </Window>
  );
}
